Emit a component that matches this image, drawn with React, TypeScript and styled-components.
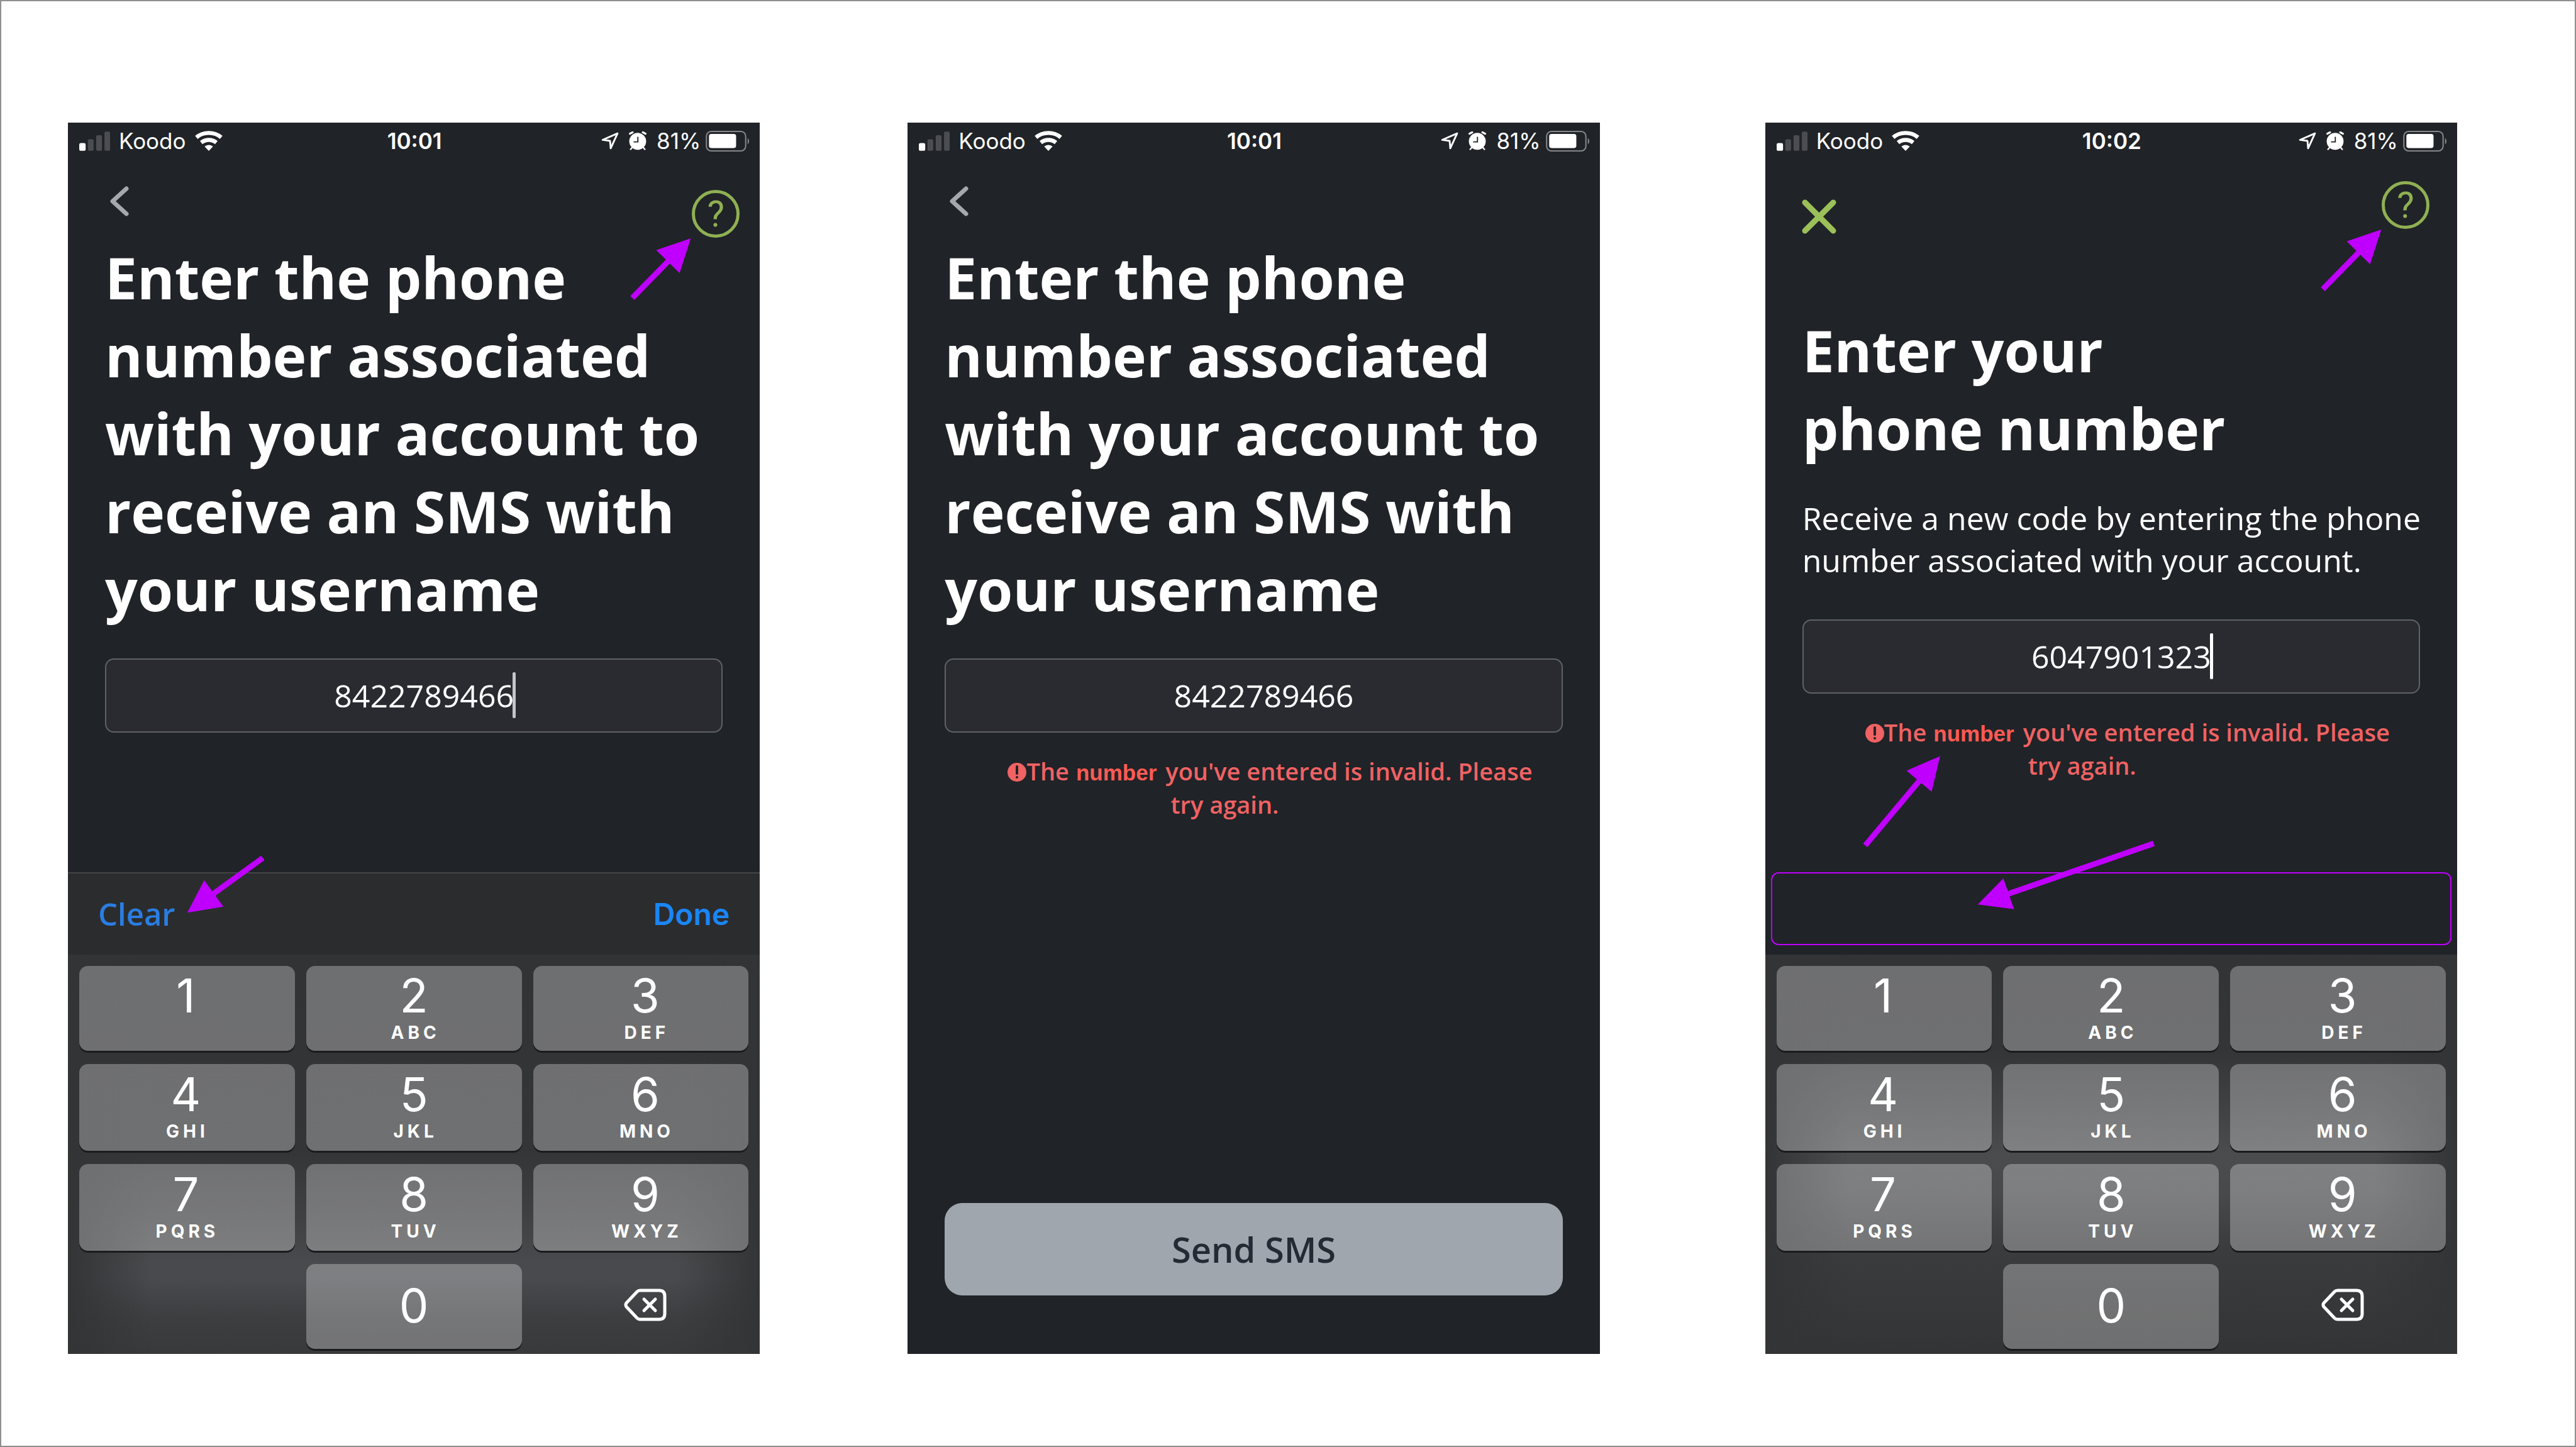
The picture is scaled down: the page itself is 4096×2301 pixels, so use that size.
import React, { useId } from "react";
import styled, { createGlobalStyle, css } from "styled-components";

const color = {
  ink: "#202327",
  white: "#ffffff",
  mark: "#bf00ff",
  leaf: "#8fb053",
  leafBright: "#9bc05a",
  danger: "#f06263",
  dangerEdit: "#ff5a54",
};

const font = {
  brand: `"Open Sans", "Noto Sans", sans-serif`,
  system: `Inter, Roboto, sans-serif`,
  edit: `"Liberation Sans", Arial, sans-serif`,
};

const GlobalStyle = createGlobalStyle`
  *, *::before, *::after { box-sizing: border-box; }
  body { margin: 0; background: #ffffff; }
  button, input { font: inherit; color: inherit; margin: 0; }
  h1, p { margin: 0; }
`;

const Board = styled.main`
  display: flex;
  align-items: flex-start;
  min-height: 100vh;
  padding: 193px 187px 128px 106px;
  border: 2px solid #8f8f8f;
  background: ${color.white};
`;

const Screen = styled.section<{ $before?: number }>`
  position: relative;
  display: flex;
  flex: 1 1 0;
  flex-direction: column;
  min-width: 0;
  aspect-ratio: 1101 / 1959;
  margin-left: ${(p) => p.$before ?? 0}px;
  background: ${color.ink};
  color: ${color.white};
  font-family: ${font.brand};
`;

const StatusRow = styled.div`
  display: grid;
  grid-template-columns: 1fr auto 1fr;
  align-items: center;
  height: 58px;
  padding: 0 16px 0 18px;
  font-family: ${font.system};
  font-size: 35px;
  line-height: 40px;
`;

const StatusGroup = styled.div<{ $end?: boolean }>`
  display: flex;
  align-items: center;
  justify-content: ${(p) => (p.$end ? "flex-end" : "flex-start")};
  gap: ${(p) => (p.$end ? 16 : 14)}px;
`;

const Clock = styled.time`
  font-weight: 600;
`;

const Power = styled.span`
  display: flex;
  align-items: center;
  gap: 8px;
`;

const Header = styled.header<{ $tall?: boolean }>`
  display: flex;
  align-items: flex-start;
  justify-content: space-between;
  min-height: ${(p) => (p.$tall ? 242 : 126)}px;
  padding: ${(p) => (p.$tall ? "35px 44px 0 58px" : "43px 32px 0 67px")};
`;

const IconButton = styled.button<{ $drop?: number }>`
  display: flex;
  margin-top: ${(p) => p.$drop ?? 0}px;
  padding: 0;
  border: 0;
  background: none;
`;

const HelpButton = styled.button<{ $drop?: number }>`
  display: flex;
  align-items: center;
  justify-content: center;
  width: 76px;
  height: 76px;
  margin-top: ${(p) => p.$drop ?? 0}px;
  padding: 0;
  border: 5px solid ${color.leaf};
  border-radius: 50%;
  background: none;
  color: ${color.leaf};
  font-family: Roboto, sans-serif;
  font-size: 58px;
  line-height: 66px;
`;

const Content = styled.div`
  display: flex;
  flex: 1;
  flex-direction: column;
  padding: 0 59px;
`;

const Title = styled.h1`
  font-size: 91px;
  font-weight: 700;
  line-height: 124px;
`;

const Lead = styled.p`
  margin: 48px -16px 0 0;
  font-size: 50px;
  line-height: 67px;
`;

const Field = styled.div<{ $gap: number }>`
  position: relative;
  margin-top: ${(p) => p.$gap}px;
`;

const PhoneInput = styled.input`
  display: block;
  width: 100%;
  height: 118px;
  padding: 0 0 0 32px;
  border: 2px solid #5f6266;
  border-radius: 14px;
  outline: none;
  background: #292b30;
  font-size: 50px;
  text-align: center;
`;

const Caret = styled.span<{ $dim?: boolean }>`
  position: absolute;
  top: 22px;
  left: calc(50% + 157px);
  width: 5px;
  height: 73px;
  border-radius: 2px;
  background: ${(p) => (p.$dim ? "#c3c5ca" : color.white)};
`;

const Alert = styled.div`
  display: flex;
  flex-direction: column;
  margin-top: 36px;
  color: ${color.danger};
  font-size: 38px;
  font-weight: 600;
  line-height: 51px;
`;

const AlertLine = styled.span<{ $last?: boolean }>`
  display: flex;
  align-items: baseline;
  justify-content: center;
  white-space: pre;
  ${(p) =>
    p.$last
      ? css`
          padding-right: 92px;
        `
      : css`
          padding-left: 52px;
        `}

  svg {
    align-self: center;
  }
`;

const Correction = styled.strong`
  margin: 0 14px 0 11px;
  color: ${color.dangerEdit};
  font-family: ${font.edit};
  font-size: 35px;
  font-weight: 700;
`;

const SendButton = styled.button`
  height: 147px;
  margin: auto 0 93px;
  border: 0;
  border-radius: 28px;
  background: #9fa6ad;
  color: #222a34;
  font-size: 56px;
  font-weight: 600;
`;

const Toolbar = styled.div`
  display: flex;
  align-items: center;
  justify-content: space-between;
  height: 131px;
  padding: 0 48px;
  border-top: 2px solid #434446;
  background: #2b2c2e;
`;

const ToolbarButton = styled.button<{ $system?: boolean }>`
  padding: 0;
  border: 0;
  background: none;
  color: ${(p) => (p.$system ? "#1a86f5" : "#2a7de1")};
  font-family: ${(p) => (p.$system ? font.system : font.brand)};
  font-size: ${(p) => (p.$system ? 48 : 49)}px;
  font-weight: 600;
`;

const MissingToolbar = styled.div`
  height: 131px;
  padding: 0 9px 15px;
`;

const MissingOutline = styled.div`
  height: 100%;
  border: 2px solid ${color.mark};
  border-radius: 12px;
`;

const glowLow = `linear-gradient(to bottom, #323335 0%, #343537 49%, #3f4042 65%, #494a4d 77%, #484a4e 81%, #3d3e40 91%, #38393b 100%)`;
const glowMid = `linear-gradient(to bottom, #323335 0%, #343537 24%, #404143 38%, #4b4c4e 50%, #48494b 60%, #3b3c3e 73%, #373839 86%, #333436 100%)`;

const Pad = styled.div<{ $glow: string }>`
  display: grid;
  grid-template-columns: repeat(3, 1fr);
  grid-template-rows: 135px 138px 138px 135px;
  gap: 21px 18px;
  padding: 18px 18px 8px;
  background: linear-gradient(to right, #333436 0%, #33343600 12%, #33343600 88%, #333436 100%),
    ${(p) => p.$glow};
  font-family: ${font.system};
`;

const keyColumn = css`
  &:nth-child(3n) {
    padding-left: 14px;
  }
  &:nth-child(3n + 1) {
    padding-right: 4px;
  }
`;

const Key = styled.button`
  display: flex;
  flex-direction: column;
  align-items: center;
  justify-content: center;
  gap: 5px;
  padding: 0 0 2px;
  border: 0;
  border-radius: 14px;
  background: #ffffff4b;
  box-shadow: 0 3px 0 #1a1b1d;
  ${keyColumn}
`;

const EraseKey = styled.button`
  display: flex;
  align-items: center;
  justify-content: center;
  padding: 0 0 4px;
  border: 0;
  background: none;
  ${keyColumn}
`;

const Digit = styled.span`
  font-size: 74px;
  line-height: 74px;
`;

const Letters = styled.span`
  height: 34px;
  padding-left: 5px;
  font-size: 28px;
  font-weight: 700;
  letter-spacing: 6px;
  line-height: 34px;
`;

const Notes = styled.svg`
  position: absolute;
  inset: 0;
  width: 100%;
  height: 100%;
  pointer-events: none;
`;

function SignalIcon() {
  return (
    <svg width="49" height="31" viewBox="0 0 193 121" aria-hidden="true">
      <rect x="0" y="72" width="40" height="49" rx="10" fill="#fff" />
      <rect x="54" y="49" width="36" height="72" rx="8" fill="#4b4d51" />
      <rect x="106" y="23" width="36" height="98" rx="8" fill="#4b4d51" />
      <rect x="158" y="0" width="35" height="121" rx="8" fill="#4b4d51" />
    </svg>
  );
}

function WifiIcon() {
  return (
    <svg width="44" height="32" viewBox="0 0 172 125" aria-hidden="true">
      <g fill="none" stroke="#fff" strokeWidth="25">
        <path d="M9 41 C52 4 120 4 163 41" />
        <path d="M39 73 C66 51 106 51 133 73" />
      </g>
      <path d="M86 125 L60 98 C75 84 97 84 112 98 Z" fill="#fff" />
    </svg>
  );
}

function LocationIcon() {
  return (
    <svg width="28" height="28" viewBox="0 0 108 108" aria-hidden="true">
      <path
        d="M100 8 L8 48 L54 54 L58 100 Z"
        fill="none"
        stroke="#fff"
        strokeWidth="11"
        strokeLinejoin="round"
      />
    </svg>
  );
}

function AlarmIcon() {
  return (
    <svg width="28" height="30" viewBox="0 0 106 114" aria-hidden="true">
      <g stroke="#fff" strokeLinecap="round">
        <path d="M6 14 L22 5 M100 14 L84 5" strokeWidth="12" />
        <path d="M22 94 L10 108 M84 94 L96 108" strokeWidth="9" />
      </g>
      <circle cx="53" cy="60" r="51" fill="#fff" />
      <path d="M54 32 V63 H28" fill="none" stroke={color.ink} strokeWidth="7" />
    </svg>
  );
}

function BatteryIcon() {
  return (
    <svg width="70" height="33" viewBox="0 0 274 130" aria-hidden="true">
      <rect x="4" y="4" width="246" height="122" rx="30" fill="none" stroke="#85878a" strokeWidth="8" />
      <rect x="20" y="20" width="170" height="88" rx="14" fill="#fff" />
      <path d="M262 46 C274 52 274 78 262 84 Z" fill="#85878a" />
    </svg>
  );
}

function BackIcon() {
  return (
    <svg width="30" height="48" viewBox="0 0 30 48" aria-hidden="true">
      <path
        d="M26 4 L4 24 L26 44"
        fill="none"
        stroke="#a6a8ac"
        strokeWidth="7"
        strokeLinecap="round"
        strokeLinejoin="round"
      />
    </svg>
  );
}

function CloseIcon() {
  return (
    <svg width="55" height="55" viewBox="0 0 55 55" aria-hidden="true">
      <path
        d="M5 5 L50 50 M50 5 L5 50"
        stroke={color.leafBright}
        strokeWidth="9"
        strokeLinecap="round"
      />
    </svg>
  );
}

function WarningIcon() {
  return (
    <svg width="30" height="30" viewBox="0 0 30 30" aria-hidden="true">
      <circle cx="15" cy="15" r="15" fill={color.danger} />
      <path d="M15 6 V17" stroke={color.ink} strokeWidth="4" strokeLinecap="round" />
      <circle cx="15" cy="23" r="2" fill={color.ink} />
    </svg>
  );
}

function EraseIcon() {
  return (
    <svg width="68" height="52" viewBox="0 0 68 52" aria-hidden="true">
      <g fill="none" stroke="#fff" strokeLinecap="round" strokeLinejoin="round">
        <path
          d="M26 3 H56 Q65 3 65 12 V40 Q65 49 56 49 H26 Q23 49 21 47 L4 29 Q2 26 4 23 L21 5 Q23 3 26 3 Z"
          strokeWidth="5"
        />
        <path d="M32 17 L50 35 M50 17 L32 35" strokeWidth="5" />
      </g>
    </svg>
  );
}

type Point = [number, number];

function Arrow({ from, to }: { from: Point; to: Point }) {
  const length = Math.hypot(to[0] - from[0], to[1] - from[1]);
  const ux = (to[0] - from[0]) / length;
  const uy = (to[1] - from[1]) / length;
  const head = 52;
  const half = 26;
  const bx = to[0] - ux * head;
  const by = to[1] - uy * head;
  return (
    <g>
      <line
        x1={from[0]}
        y1={from[1]}
        x2={bx + ux * 4}
        y2={by + uy * 4}
        stroke={color.mark}
        strokeWidth="9"
      />
      <polygon
        fill={color.mark}
        points={`${to[0]},${to[1]} ${bx - uy * half},${by + ux * half} ${bx + uy * half},${by - ux * half}`}
      />
    </g>
  );
}

function Annotations({ arrows }: { arrows: { from: Point; to: Point }[] }) {
  return (
    <Notes viewBox="0 0 1101 1959" aria-hidden="true">
      {arrows.map((a, i) => (
        <Arrow key={i} from={a.from} to={a.to} />
      ))}
    </Notes>
  );
}

function StatusBar({ time }: { time: string }) {
  return (
    <StatusRow>
      <StatusGroup>
        <SignalIcon />
        <span>Koodo</span>
        <WifiIcon />
      </StatusGroup>
      <Clock>{time}</Clock>
      <StatusGroup $end>
        <LocationIcon />
        <AlarmIcon />
        <Power>
          <span>81%</span>
          <BatteryIcon />
        </Power>
      </StatusGroup>
    </StatusRow>
  );
}

function PhoneField({
  id,
  value,
  gap,
  caret,
}: {
  id: string;
  value: string;
  gap: number;
  caret?: "dim" | "bright";
}) {
  return (
    <Field $gap={gap}>
      <PhoneInput id={id} type="tel" defaultValue={value} />
      {caret && <Caret $dim={caret === "dim"} />}
    </Field>
  );
}

function InvalidNumber() {
  return (
    <Alert role="alert">
      <AlertLine>
        <WarningIcon />
        The<Correction>number</Correction>you've entered is invalid. Please
      </AlertLine>
      <AlertLine $last>try again.</AlertLine>
    </Alert>
  );
}

const keys: [string, string][] = [
  ["1", ""],
  ["2", "ABC"],
  ["3", "DEF"],
  ["4", "GHI"],
  ["5", "JKL"],
  ["6", "MNO"],
  ["7", "PQRS"],
  ["8", "TUV"],
  ["9", "WXYZ"],
];

function Keypad({ glow }: { glow: string }) {
  return (
    <Pad $glow={glow}>
      {keys.map(([digit, letters]) => (
        <Key key={digit} type="button">
          <Digit>{digit}</Digit>
          <Letters>{letters}</Letters>
        </Key>
      ))}
      <span />
      <Key type="button">
        <Digit>0</Digit>
      </Key>
      <EraseKey type="button" aria-label="Delete">
        <EraseIcon />
      </EraseKey>
    </Pad>
  );
}

const usernamePrompt =
  "Enter the phone number associated with your account to receive an SMS with your username";

function UsernameEntry() {
  const id = useId();
  return (
    <Screen>
      <StatusBar time="10:01" />
      <Header>
        <IconButton type="button" aria-label="Back">
          <BackIcon />
        </IconButton>
        <HelpButton type="button" aria-label="Help" $drop={6}>
          ?
        </HelpButton>
      </Header>
      <Content>
        <Title>
          <label htmlFor={id}>{usernamePrompt}</label>
        </Title>
        <PhoneField id={id} value="8422789466" gap={48} caret="dim" />
      </Content>
      <Toolbar>
        <ToolbarButton type="button">Clear</ToolbarButton>
        <ToolbarButton type="button" $system>
          Done
        </ToolbarButton>
      </Toolbar>
      <Keypad glow={glowLow} />
      <Annotations
        arrows={[
          { from: [898, 279], to: [991, 184] },
          { from: [310, 1170], to: [190, 1257] },
        ]}
      />
    </Screen>
  );
}

function UsernameInvalid() {
  const id = useId();
  return (
    <Screen $before={235}>
      <StatusBar time="10:01" />
      <Header>
        <IconButton type="button" aria-label="Back">
          <BackIcon />
        </IconButton>
      </Header>
      <Content>
        <Title>
          <label htmlFor={id}>{usernamePrompt}</label>
        </Title>
        <PhoneField id={id} value="8422789466" gap={48} />
        <InvalidNumber />
        <SendButton type="button">Send SMS</SendButton>
      </Content>
    </Screen>
  );
}

function NewCodeInvalid() {
  const id = useId();
  return (
    <Screen $before={263}>
      <StatusBar time="10:02" />
      <Header $tall>
        <IconButton type="button" aria-label="Close" $drop={29}>
          <CloseIcon />
        </IconButton>
        <HelpButton type="button" aria-label="Help">
          ?
        </HelpButton>
      </Header>
      <Content>
        <Title>
          <label htmlFor={id}>
            Enter your
            <br />
            phone number
          </label>
        </Title>
        <Lead>Receive a new code by entering the phone number associated with your account.</Lead>
        <PhoneField id={id} value="6047901323" gap={60} caret="bright" />
        <InvalidNumber />
      </Content>
      <MissingToolbar>
        <MissingOutline />
      </MissingToolbar>
      <Keypad glow={glowMid} />
      <Annotations
        arrows={[
          { from: [887, 265], to: [980, 170] },
          { from: [159, 1150], to: [278, 1008] },
          { from: [618, 1147], to: [338, 1244] },
        ]}
      />
    </Screen>
  );
}

export default function App() {
  return (
    <>
      <GlobalStyle />
      <Board>
        <UsernameEntry />
        <UsernameInvalid />
        <NewCodeInvalid />
      </Board>
    </>
  );
}
